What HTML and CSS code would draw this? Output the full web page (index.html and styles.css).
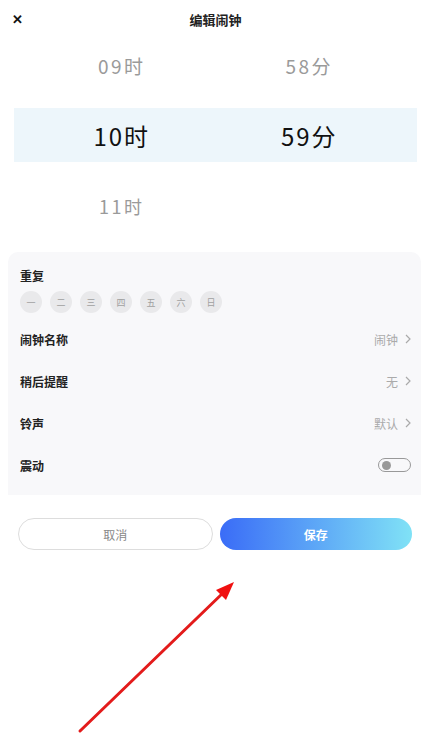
FILE: index.html
```html
<!DOCTYPE html>
<html lang="zh-CN">
<head>
    <meta charset="UTF-8">
    <meta name="viewport" content="width=device-width, initial-scale=1.0">
    <title>编辑闹钟</title>
    <link rel="stylesheet" href="styles.css">
</head>
<body>

    <div class="page">
        <div class="header">
            <span class="close">&#x2715;</span>
            <h1>编辑闹钟</h1>
        </div>

        <div class="picker">
            <div class="pick-row dim">
                <span>09时</span>
                <span>58分</span>
            </div>
            <div class="pick-row active">
                <span>10时</span>
                <span>59分</span>
            </div>
            <div class="pick-row dim small">
                <span>11时</span>
                <span></span>
            </div>
        </div>

        <div class="card">
            <div class="repeat-title">重复</div>
            <div class="days">
                <span class="day">一</span>
                <span class="day">二</span>
                <span class="day">三</span>
                <span class="day">四</span>
                <span class="day">五</span>
                <span class="day">六</span>
                <span class="day">日</span>
            </div>

            <div class="row">
                <span class="label">闹钟名称</span>
                <span class="value">闹钟
                    <svg class="chev" width="6" height="10" viewBox="0 0 6 10"><path d="M1 1l4 4-4 4" fill="none" stroke="#aaa" stroke-width="1.2"/></svg>
                </span>
            </div>
            <div class="row">
                <span class="label">稍后提醒</span>
                <span class="value">无
                    <svg class="chev" width="6" height="10" viewBox="0 0 6 10"><path d="M1 1l4 4-4 4" fill="none" stroke="#aaa" stroke-width="1.2"/></svg>
                </span>
            </div>
            <div class="row">
                <span class="label">铃声</span>
                <span class="value">默认
                    <svg class="chev" width="6" height="10" viewBox="0 0 6 10"><path d="M1 1l4 4-4 4" fill="none" stroke="#aaa" stroke-width="1.2"/></svg>
                </span>
            </div>
            <div class="row">
                <span class="label">震动</span>
                <span class="toggle"><span class="knob"></span></span>
            </div>
        </div>

        <div class="actions">
            <button class="btn cancel">取消</button>
            <button class="btn save">保存</button>
        </div>

        <!-- annotation arrow -->
        <svg class="arrow" width="431" height="750" viewBox="0 0 431 750">
            <line x1="80" y1="731" x2="224" y2="592" stroke="#e31b1b" stroke-width="3" stroke-linecap="round"/>
            <polygon points="234,582 226,600 216,590" fill="#f01010"/>
        </svg>
    </div>

</body>
</html>
```

FILE: styles.css
```css
body {
    margin: 0;
    background: #fff;
    font-family: "Noto Sans CJK SC", "Noto Sans", sans-serif;
    color: #222;
}
.page {
    position: relative;
    width: 431px;
    height: 750px;
    overflow: hidden;
}
.header {
    height: 38px;
    display: flex;
    align-items: center;
    justify-content: center;
    position: relative;
}
.header h1 {
    margin: 0;
    font-size: 13px;
    font-weight: 700;
    color: #222;
}
.close {
    position: absolute;
    left: 12px;
    top: 10px;
    font-size: 13px;
    font-weight: 700;
    line-height: 18px;
    color: #111;
}
.picker {
    display: flex;
    flex-direction: column;
    gap: 16px;
    margin: 0 14px;
}
.pick-row {
    height: 54px;
    display: grid;
    grid-template-columns: 1fr 1fr;
    align-items: center;
    padding: 0 14px;
    text-align: center;
    letter-spacing: 2.5px;
}
.pick-row.dim {
    font-size: 19px;
    color: #9a9a9a;
}
.pick-row.small {
    font-size: 18px;
    margin-top: 1px;
}
.pick-row.active {
    background: #edf6fb;
    font-size: 24px;
    color: #111;
    letter-spacing: 2px;
}
.card {
    margin: 19px 10px 0 8px;
    background: #f8f8fa;
    border-radius: 10px 10px 0 0;
    padding: 16px 10px 9px 12px;
}
.repeat-title {
    font-size: 12px;
    font-weight: 700;
    line-height: 16px;
}
.days {
    display: flex;
    gap: 8px;
    margin-top: 7px;
    margin-bottom: 5px;
}
.day {
    width: 22px;
    height: 22px;
    border-radius: 50%;
    background: #e9e9eb;
    color: #a0a0a0;
    font-size: 9px;
    display: flex;
    align-items: center;
    justify-content: center;
}
.row {
    height: 42px;
    display: flex;
    align-items: center;
    justify-content: space-between;
}
.label {
    font-size: 12px;
    font-weight: 700;
    color: #222;
}
.value {
    font-size: 12px;
    color: #aaa;
    display: flex;
    align-items: center;
    gap: 7px;
}
.toggle {
    width: 28px;
    height: 12px;
    border: 1.5px solid #999;
    border-radius: 9px;
    display: flex;
    align-items: center;
    padding-left: 3px;
    box-sizing: content-box;
}
.knob {
    width: 9px;
    height: 9px;
    border-radius: 50%;
    background: #999;
}
.actions {
    display: flex;
    gap: 7px;
    margin: 23px 19px 0 18px;
}
.btn {
    flex: 1;
    height: 32px;
    border-radius: 16px;
    font-family: inherit;
    font-size: 12px;
}
.cancel {
    background: #fff;
    border: 1px solid #ddd;
    color: #888;
}
.save {
    border: none;
    background: linear-gradient(90deg, #3a6cf7, #80e2f6);
    color: #fff;
    font-weight: 700;
}
.arrow {
    position: absolute;
    left: 0;
    top: 0;
    pointer-events: none;
}
```
